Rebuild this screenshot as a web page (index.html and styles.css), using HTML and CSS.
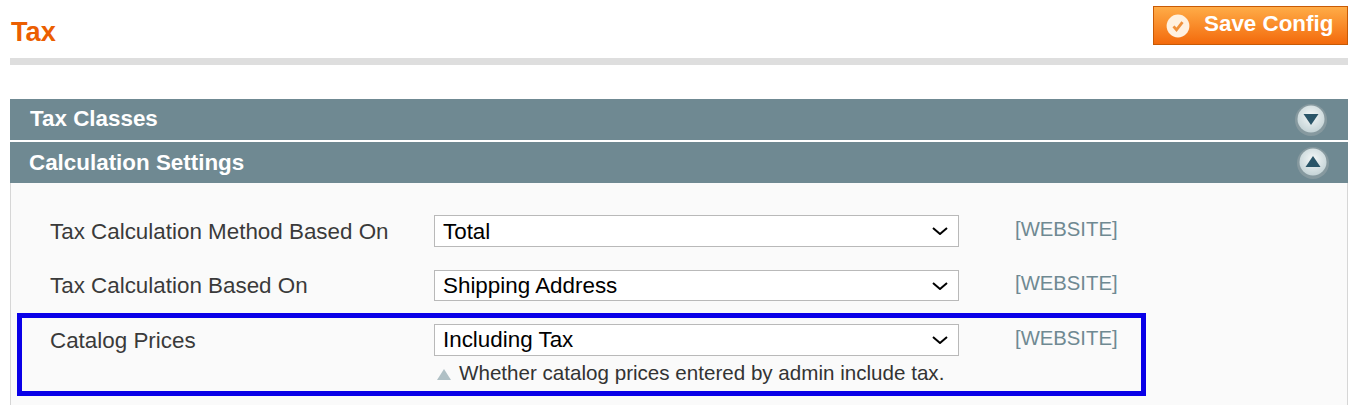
FILE: index.html
```html
<!DOCTYPE html>
<html lang="en">
<head>
<meta charset="utf-8">
<title>Tax</title>
<link rel="stylesheet" href="styles.css">
</head>
<body>
<header class="page-head">
  <h1 class="page-title">Tax</h1>
  <button class="save-btn" type="button">
    <svg class="save-icon" viewBox="0 0 24 24" width="24" height="24" aria-hidden="true">
      <defs>
        <filter id="soft" x="-20%" y="-20%" width="140%" height="140%"><feGaussianBlur stdDeviation="0.5"/></filter>
      </defs>
      <g filter="url(#soft)">
        <circle cx="12" cy="12" r="11.4" fill="#fff1e0"/>
        <path d="M7.5 12.4l3 3.4 6-7.6" fill="none" stroke="#f0913a" stroke-width="2.8"/>
      </g>
    </svg>
    <span>Save Config</span>
  </button>
</header>

<section class="section">
  <div class="section-head head-first">
    <span class="section-title title-first">Tax Classes</span>
    <svg class="toggle" viewBox="0 0 34 34" width="34" height="34" aria-hidden="true">
      <defs>
        <radialGradient id="knob" cx="50%" cy="40%" r="60%">
          <stop offset="0" stop-color="#f4f8f8"/>
          <stop offset="1" stop-color="#c4d3d6"/>
        </radialGradient>
        <filter id="blur" x="-20%" y="-20%" width="140%" height="140%"><feGaussianBlur stdDeviation="0.7"/></filter>
      </defs>
      <g filter="url(#blur)">
        <circle cx="17" cy="17" r="16" fill="#86999f"/>
        <circle cx="17" cy="16" r="13.5" fill="url(#knob)"/>
        <path d="M9.5 11h15L17 22z" fill="#2a5467"/>
      </g>
    </svg>
  </div>
  <div class="section-head">
    <span class="section-title">Calculation Settings</span>
    <svg class="toggle" viewBox="0 0 34 34" width="34" height="34" aria-hidden="true">
      <g filter="url(#blur)">
        <circle cx="17" cy="17" r="16" fill="#86999f"/>
        <circle cx="17" cy="16" r="13.5" fill="url(#knob)"/>
        <path d="M9.5 21h15L17 10z" fill="#2a5467"/>
      </g>
    </svg>
  </div>
  <div class="panel">
    <div class="row">
      <label class="row-label">Tax Calculation Method Based On</label>
      <select class="row-select"><option>Total</option></select>
      <span class="scope">[WEBSITE]</span>
    </div>
    <div class="row">
      <label class="row-label">Tax Calculation Based On</label>
      <select class="row-select"><option>Shipping Address</option></select>
      <span class="scope">[WEBSITE]</span>
    </div>
    <div class="row highlighted">
      <label class="row-label">Catalog Prices</label>
      <div class="field">
        <select class="row-select"><option>Including Tax</option></select>
        <p class="note"><span class="note-arrow"></span>Whether catalog prices entered by admin include tax.</p>
      </div>
      <span class="scope">[WEBSITE]</span>
      <div class="highlight-box"></div>
    </div>
  </div>
</section>
</body>
</html>
```

FILE: styles.css
```css
* { box-sizing: border-box; }

html, body { height: 405px; overflow: hidden; }

body {
  margin: 0;
  padding: 0 10px;
  background: #fff;
  font-family: "Liberation Sans", Arial, sans-serif;
  color: #333;
}

.page-head {
  display: flex;
  justify-content: space-between;
  align-items: flex-start;
  height: 65px;
  padding-top: 6px;
  border-bottom: 7px solid #dedede;
}

.page-title {
  margin: 11px 0 0 1px;
  font-size: 27.2px;
  line-height: 30px;
  font-weight: 700;
  color: #eb5e00;
}

.save-btn {
  display: flex;
  align-items: center;
  gap: 14px;
  width: 195px;
  height: 39px;
  padding: 0 0 3px 12px;
  border: 1px solid #c85a05;
  background: linear-gradient(#ffac47, #f36a0c);
  color: #fff;
  font: 700 22.4px "Liberation Sans", Arial, sans-serif;
  white-space: nowrap;
}

.save-icon { flex: none; margin-top: 3px; }

.section { margin-top: 34px; }

.section-head {
  display: flex;
  justify-content: space-between;
  align-items: center;
  height: 41px;
  padding: 0 18px 0 19px;
  background: #6f8992;
}

.head-first {
  margin-bottom: 2px;
  padding-right: 20px;
}

.section-title {
  color: #fff;
  font-size: 22.4px;
  font-weight: 700;
}

.title-first { margin-left: 1px; margin-top: -2px; }

.panel {
  height: 222px;
  padding: 32px 0 0 39px;
  background: #fafafa;
  border-left: 1px solid #d6d6d6;
  border-right: 1px solid #d6d6d6;
}

.row {
  position: relative;
  display: grid;
  grid-template-columns: 384px 525px auto;
  align-items: start;
  height: 55px;
}

.row:nth-child(2) { height: 54px; }

.row-label {
  font-size: 22.4px;
  line-height: 33px;
  color: #3a3a3a;
}

.row:nth-child(2) .row-label { line-height: 31px; }

.row-select {
  display: block;
  width: 525px;
  height: 32px;
  padding: 0 0 0 8px;
  border: 1px solid #b9b9b9;
  border-radius: 0;
  appearance: none;
  background: #fff url("data:image/svg+xml,%3Csvg xmlns='http://www.w3.org/2000/svg' width='16' height='8' viewBox='0 0 16 8'%3E%3Cpath d='M1 1l7 6 7-6' fill='none' stroke='%23000' stroke-width='2'/%3E%3C/svg%3E") no-repeat right 10px center;
  color: #000;
  font: 22.4px "Liberation Sans", Arial, sans-serif;
}

.row:nth-child(2) .row-select { height: 31px; }

.highlighted .row-select { padding-bottom: 2px; }

.row:nth-child(2) .scope { margin-top: -1px; }

.scope {
  margin-left: 56px;
  font-size: 20.3px;
  line-height: 28px;
  color: #6f8992;
}

.note {
  display: flex;
  align-items: center;
  margin: 5px 0 0;
  font-size: 20.6px;
  line-height: 24px;
  color: #333;
  white-space: nowrap;
}

.note-arrow {
  width: 0;
  height: 0;
  margin: 2px 8px 0 3px;
  border-left: 7px solid transparent;
  border-right: 7px solid transparent;
  border-bottom: 11px solid #b0c0c5;
}

.highlight-box {
  position: absolute;
  left: -33px;
  top: -11px;
  width: 1129px;
  height: 83px;
  border: 5px solid #0a00e8;
  pointer-events: none;
}
```
